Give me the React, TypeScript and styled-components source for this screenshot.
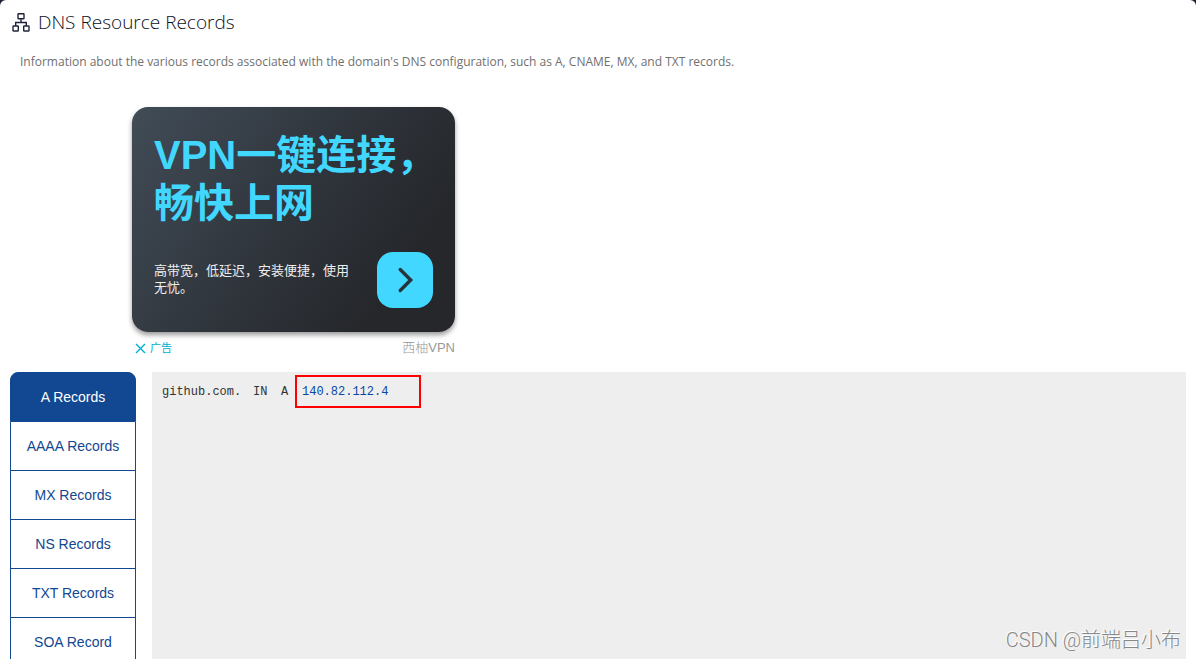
import React, { useState } from "react";
import styled, { createGlobalStyle } from "styled-components";

const GlobalStyle = createGlobalStyle`
  * { box-sizing: border-box; }
  body {
    margin: 0;
    background: #1b2136;
    font-family: "Open Sans", "Noto Sans CJK SC", sans-serif;
  }
`;

const Page = styled.main`
  position: relative;
  display: flex;
  flex-direction: column;
  height: 100vh;
  overflow: hidden;
  padding: 10px 10px 0;
  background: #fff;
  border-radius: 6px 6px 0 0;
`;

const Heading = styled.h1`
  display: flex;
  align-items: center;
  gap: 8px;
  margin: 0;
  padding-left: 2px;
  height: 24px;
  font-size: 19px;
  line-height: 24px;
  font-weight: 300;
  color: #0c1122;
`;

const Intro = styled.p`
  margin: 18px 0 0;
  padding-left: 10px;
  font-size: 12px;
  line-height: 20px;
  color: #707070;
`;

const Ad = styled.aside`
  width: 323px;
  margin: 35px 0 0 122px;
  flex: none;
`;

const AdCard = styled.div`
  display: flex;
  flex-direction: column;
  justify-content: space-between;
  height: 225px;
  padding: 24px 22px;
  border-radius: 16px;
  background: linear-gradient(125deg, #414c57 0%, #2f343b 50%, #25272b 80%);
  box-shadow: 0 3px 5px rgba(0, 0, 0, 0.4);
`;

const AdTitle = styled.h2`
  margin: 0;
  font-family: "Liberation Sans", "Noto Sans CJK SC", sans-serif;
  font-size: 40px;
  line-height: 48px;
  font-weight: 700;
  white-space: nowrap;
  color: #41d7ff;
`;

const AdBottom = styled.div`
  display: flex;
  align-items: center;
  justify-content: space-between;
`;

const AdText = styled.p`
  width: 200px;
  margin: 0;
  padding-bottom: 4px;
  font-family: "Noto Sans CJK SC", sans-serif;
  font-size: 13px;
  line-height: 17px;
  color: #eee;
`;

const AdButton = styled.button`
  display: grid;
  place-items: center;
  width: 56px;
  height: 56px;
  padding: 0;
  border: 0;
  border-radius: 16px;
  background: #41d7ff;
`;

const AdFooter = styled.div`
  display: flex;
  align-items: center;
  justify-content: space-between;
  height: 32px;
  padding-left: 3px;
`;

const AdChoice = styled.a`
  display: flex;
  align-items: center;
  gap: 4px;
  font-size: 11px;
  line-height: 16px;
  color: #00aecd;
  text-decoration: none;
`;

const Brand = styled.span`
  font-family: "Liberation Sans", "Noto Sans CJK SC", sans-serif;
  font-size: 13px;
  line-height: 16px;
  font-weight: 300;
  color: #999;
`;

const Records = styled.section`
  display: flex;
  flex: 1;
  min-height: 0;
  gap: 16px;
  margin-top: 8px;
`;

const Tabs = styled.div`
  display: flex;
  flex-direction: column;
  flex: none;
  width: 126px;
`;

const Tab = styled.button<{ $active: boolean }>`
  flex: none;
  height: 49px;
  padding: 0;
  border: 1px solid #124791;
  border-top: 0;
  background: ${(p) => (p.$active ? "#124791" : "#fff")};
  color: ${(p) => (p.$active ? "#fff" : "#124791")};
  font-family: "Liberation Sans", sans-serif;
  font-size: 14px;
  line-height: 20px;
  cursor: pointer;

  &:first-child {
    height: 50px;
    border-top: 1px solid #124791;
    border-radius: 8px 8px 0 0;
  }
`;

const Panel = styled.div`
  flex: 1;
  padding: 3px 10px;
  background: #eee;
`;

const Entry = styled.div`
  display: flex;
  align-items: center;
  font-family: "Liberation Mono", monospace;
  font-size: 12px;
  line-height: 16px;
  color: #333;
`;

const Name = styled.span`
  width: 91px;
`;

const Kind = styled.span`
  width: 28px;
`;

const Type = styled.span`
  width: 14px;
`;

const Address = styled.a`
  width: 126px;
  height: 33px;
  padding: 7px 5px;
  border: 2px solid #f00;
  color: #0a47a5;
  line-height: 16px;
  text-decoration: none;
`;

const Watermark = styled.span`
  position: absolute;
  right: 15px;
  bottom: 5px;
  font-family: Roboto, "Noto Sans CJK SC", sans-serif;
  font-size: 20px;
  line-height: 28px;
  font-weight: 300;
  color: #888;
  text-shadow: -1px -1px 0 #fff;
`;

const tabs = [
  "A Records",
  "AAAA Records",
  "MX Records",
  "NS Records",
  "TXT Records",
  "SOA Record",
];

function NetworkIcon() {
  return (
    <svg width="18" height="20" viewBox="0 0 18 20" fill="none" stroke="#20243a" strokeWidth="1.4" aria-hidden="true">
      <rect x="6" y="1.7" width="6" height="5" rx="0.5" />
      <rect x="1" y="14" width="5.3" height="5" rx="0.5" />
      <rect x="11.7" y="14" width="5.3" height="5" rx="0.5" />
      <path d="M9 6.7v3.8M3.7 14v-3.5h10.6V14" />
    </svg>
  );
}

export default function App() {
  const [active, setActive] = useState(tabs[0]);
  return (
    <>
      <GlobalStyle />
      <Page>
        <Heading>
          <NetworkIcon />
          DNS Resource Records
        </Heading>
        <Intro>
          Information about the various records associated with the domain's DNS
          configuration, such as A, CNAME, MX, and TXT records.
        </Intro>
        <Ad>
          <AdCard>
            <AdTitle>
              VPN一键连接，
              <br />
              畅快上网
            </AdTitle>
            <AdBottom>
              <AdText>高带宽，低延迟，安装便捷，使用无忧。</AdText>
              <AdButton type="button" aria-label="打开">
                <svg width="56" height="56" viewBox="0 0 56 56" fill="none" stroke="#26333b" strokeWidth="3.4" strokeLinecap="round" aria-hidden="true">
                  <path d="M23.2 17.5 33.7 28 23.2 38.5" />
                </svg>
              </AdButton>
            </AdBottom>
          </AdCard>
          <AdFooter>
            <AdChoice href="#ad">
              <svg width="11" height="11" viewBox="0 0 11 11" stroke="#00aecd" strokeWidth="1.4" aria-hidden="true">
                <path d="M1 1l9 9M10 1l-9 9" />
              </svg>
              广告
            </AdChoice>
            <Brand>西柚VPN</Brand>
          </AdFooter>
        </Ad>
        <Records>
          <Tabs role="tablist">
            {tabs.map((t) => (
              <Tab key={t} type="button" role="tab" aria-selected={t === active} $active={t === active} onClick={() => setActive(t)}>
                {t}
              </Tab>
            ))}
          </Tabs>
          <Panel role="tabpanel">
            <Entry>
              <Name>github.com.</Name>
              <Kind>IN</Kind>
              <Type>A</Type>
              <Address href="#ip">140.82.112.4</Address>
            </Entry>
          </Panel>
        </Records>
        <Watermark>CSDN @前端吕小布</Watermark>
      </Page>
    </>
  );
}
